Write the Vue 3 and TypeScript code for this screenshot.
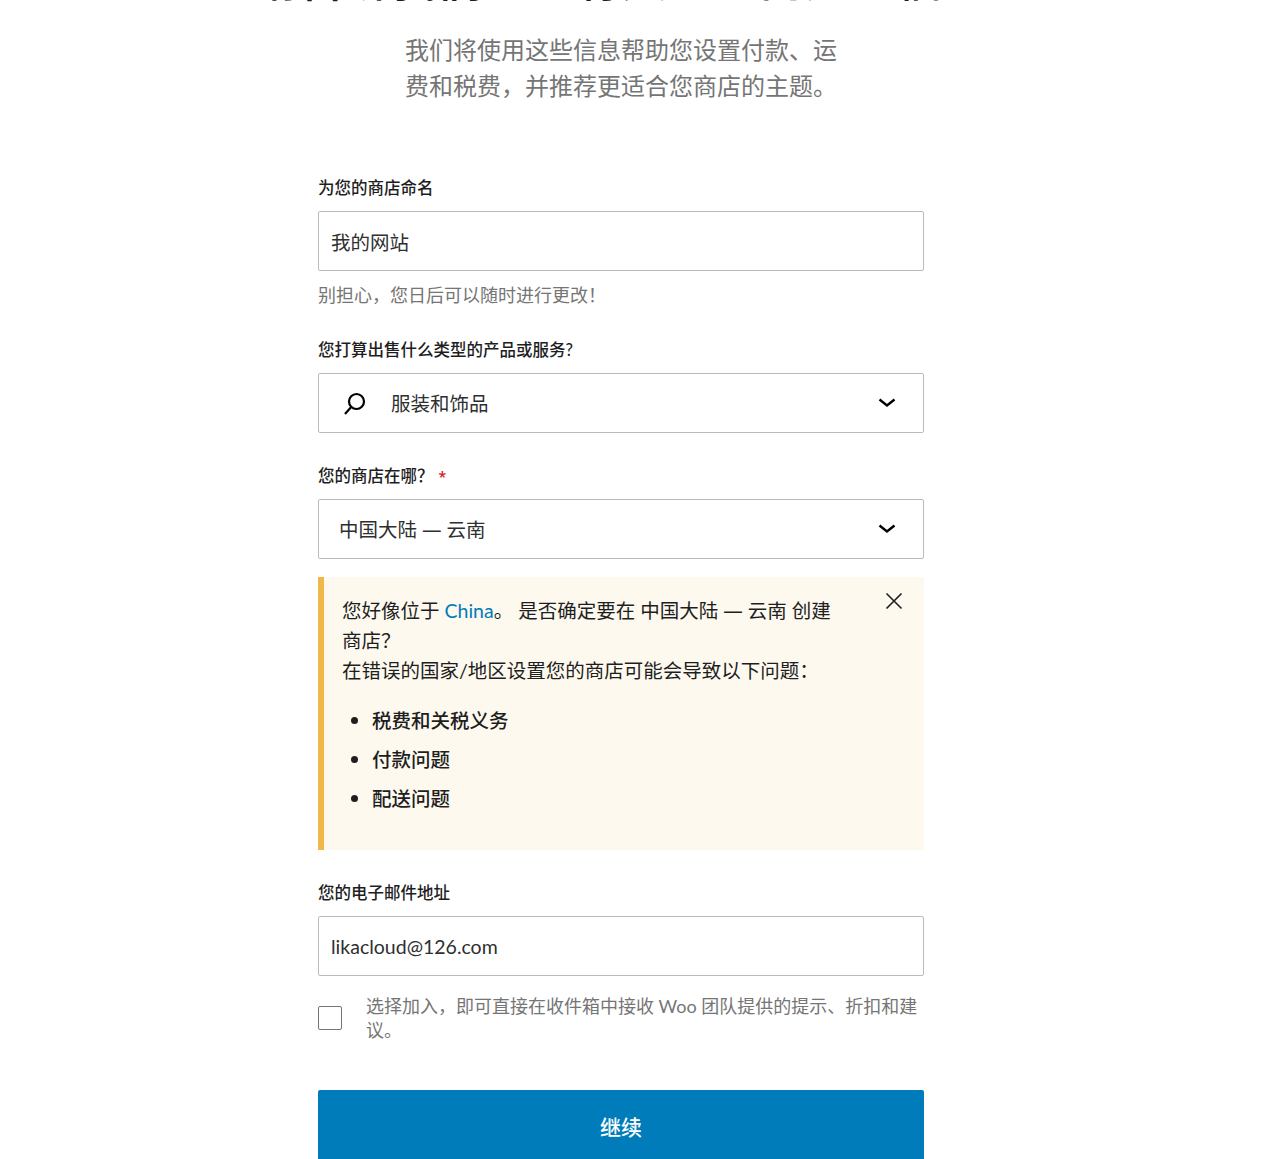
<script setup lang="ts">
const problems: string[] = ['税费和关税义务', '付款问题', '配送问题']
</script>

<template>
  <main class="page">
    <h1 class="title">请告诉我们一些有关您的商店的信息</h1>
    <p class="subtitle">我们将使用这些信息帮助您设置付款、运<br />费和税费，并推荐更适合您商店的主题。</p>
    <form class="form">
      <label class="label first">为您的商店命名</label>
      <div class="field"><span class="value plain name">我的网站</span></div>
      <p class="help">别担心，您日后可以随时进行更改！</p>

      <label class="label second">您打算出售什么类型的产品或服务?</label>
      <div class="field select">
        <svg class="search" viewBox="0 0 24 24" width="24" height="24" fill="none" stroke="#000" stroke-width="2.2">
          <circle cx="13.5" cy="10.5" r="7.5" />
          <path d="M8.2 16 2 23" />
        </svg>
        <span class="value">服装和饰品</span>
        <svg class="chev" viewBox="0 0 24 24" width="24" height="24" fill="none" stroke="#000" stroke-width="2.4">
          <path d="M4.5 8.5 12 14.5l7.5-6" />
        </svg>
      </div>

      <label class="label third">您的商店在哪？<span class="req">*</span></label>
      <div class="field select country">
        <span class="value">中国大陆 <span class="dash">—</span> 云南</span>
        <svg class="chev" viewBox="0 0 24 24" width="24" height="24" fill="none" stroke="#000" stroke-width="2.4">
          <path d="M4.5 8.5 12 14.5l7.5-6" />
        </svg>
      </div>

      <section class="notice">
        <button type="button" class="close" aria-label="关闭">
          <svg viewBox="0 0 24 24" width="24" height="24" fill="none" stroke="#1e1e1e" stroke-width="1.6">
            <path d="M4.5 4.5 19.5 19.5M19.5 4.5 4.5 19.5" />
          </svg>
        </button>
        <p class="notice-text">您好像位于 <a class="link">China</a>。 是否确定要在 中国大陆 <span class="dash">—</span> 云南 创建商店？<br />在错误的国家/地区设置您的商店可能会导致以下问题：</p>
        <ul class="list">
          <li v-for="p in problems" :key="p">{{ p }}</li>
        </ul>
      </section>

      <label class="label fourth">您的电子邮件地址</label>
      <div class="field"><span class="value plain latin">likacloud@126.com</span></div>

      <div class="optin">
        <span class="box"></span>
        <span class="optin-text">选择加入，即可直接在收件箱中接收 Woo 团队提供的提示、折扣和建议。</span>
      </div>

      <button type="button" class="submit">继续</button>
    </form>
  </main>
</template>

<style>
html, body { margin: 0; background: #fff; overflow: hidden; }
</style>

<style scoped>
.page {
  box-sizing: border-box;
  height: 1159px;
  padding-right: 30px;
  overflow: hidden;
  display: flex;
  flex-direction: column;
  align-items: center;
  font-family: "Lato", "Noto Sans CJK SC", sans-serif;
  color: #1e1e1e;
}
.title {
  margin: -44px 0 0;
  flex: none;
  font-size: 46px;
  line-height: 46px;
  font-weight: 500;
  color: #1e1e1e;
  text-align: center;
  white-space: nowrap;
}
.subtitle {
  margin: 30px 0 0;
  width: 432px;
  font-size: 24px;
  line-height: 36px;
  color: #757575;
}
.form { width: 606px; margin-top: 72px; display: flex; flex-direction: column; }
.label { font-size: 16.5px; line-height: 24px; color: #1e1e1e; font-weight: 500; display: block; }
.first { margin-bottom: 11px; }
.second { margin-top: 31px; margin-bottom: 11px; }
.third { margin-top: 31px; margin-bottom: 10px; }
.fourth { margin-top: 31px; margin-bottom: 11px; }
.req { color: #cc1818; margin-left: 5px; font-size: 14px; font-family: "Noto Sans", sans-serif; }
.dash { font-family: "Noto Sans", sans-serif; }
.field {
  box-sizing: border-box;
  height: 60px;
  flex: none;
  border: 1px solid #bbb;
  border-radius: 2px;
  display: flex;
  align-items: center;
  font-size: 19.5px;
}
.value { line-height: 28px; color: #2f2f2f; position: relative; top: 1px; }
.plain { margin-left: 12px; }
.name { top: 2px; }
.help { margin: 12px 0 0; font-size: 18px; line-height: 24px; color: #757575; }
.select { padding: 0 24px 0 24px; }
.country { padding-left: 20px; }
.search { margin-right: 24px; flex: none; }
.chev { margin-left: auto; flex: none; }
.notice {
  position: relative;
  box-sizing: border-box;
  margin-top: 18px;
  height: 273px;
  flex: none;
  background: #fdf9ef;
  border-left: 6px solid #f0b849;
  padding: 19px 80px 0 18px;
  font-size: 19.5px;
  line-height: 30px;
  color: #1e1e1e;
}
.notice-text { margin: 0; }
.link { color: #007cba; }
.close {
  position: absolute;
  top: 12px;
  right: 18px;
  padding: 0;
  border: 0;
  background: none;
  width: 24px;
  height: 24px;
}
.list { margin: 20px 0 0; padding: 0 0 0 30px; font-weight: 500; }
.list li { line-height: 30px; margin-bottom: 9px; }
.list li::marker { font-family: "Noto Sans", sans-serif; }
.optin { display: flex; margin-top: 18px; }
.box {
  box-sizing: border-box;
  flex: none;
  width: 24px;
  height: 24px;
  border: 1px solid #757575;
  border-radius: 2px;
  margin-top: 12px;
  margin-right: 24px;
}
.optin-text { font-size: 18px; line-height: 24px; color: #757575; }
.submit {
  margin-top: 48px;
  height: 74px;
  padding: 0 0 2px;
  flex: none;
  border: 0;
  border-radius: 2px;
  background: #007cba;
  color: #fff;
  font-family: inherit;
  font-size: 21px;
  font-weight: 500;
}
</style>
